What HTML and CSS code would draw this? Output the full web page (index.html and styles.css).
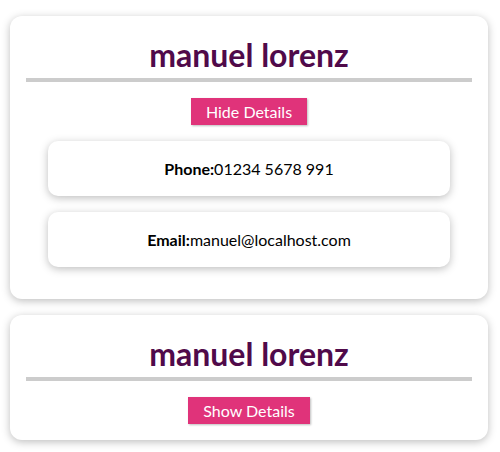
FILE: index.html
```html
<!DOCTYPE html>
<html>
<head>
<meta charset="utf-8">
<link rel="stylesheet" href="styles.css">
</head>
<body>
<ul class="friends">
  <li class="card">
    <h2 class="name">manuel lorenz</h2>
    <button class="toggle">Hide Details</button>
    <ul class="details">
      <li class="detail"><strong>Phone:</strong>01234 5678 991</li>
      <li class="detail"><strong>Email:</strong>manuel@localhost.com</li>
    </ul>
  </li>
  <li class="card">
    <h2 class="name">manuel lorenz</h2>
    <button class="toggle">Show Details</button>
  </li>
</ul>
</body>
</html>
```
FILE: styles.css
```css
html, body {
  margin: 0;
  padding: 0;
  background: #ffffff;
}
body {
  font-family: "Lato", "Open Sans", sans-serif;
  font-size: 16px;
  line-height: 23px;
  color: #000;
}
.friends {
  list-style: none;
  margin: 0;
  padding: 16px 12px 0 10px;
}
.card {
  box-shadow: 0 2px 8px rgba(0, 0, 0, 0.26);
  border-radius: 12px;
  padding: 16px;
  margin: 0 0 16px 0;
  text-align: center;
  background: #fff;
}
.name {
  font-size: 32px;
  line-height: 46px;
  font-weight: 700;
  color: #500a4a;
  margin: 0 0 16px 0;
  border-bottom: 4px solid #cccccc;
}
.toggle {
  font: inherit;
  line-height: 23px;
  border: 1px solid #e0337a;
  background: #e0337a;
  color: #fff;
  padding: 1px 14px;
  box-shadow: 1px 1px 2px rgba(0, 0, 0, 0.26);
  cursor: pointer;
}
.details {
  list-style: none;
  margin: 0;
  padding: 0;
}
.detail {
  width: 90%;
  margin: 16px auto;
  padding: 16px;
  box-sizing: border-box;
  border-radius: 10px;
  box-shadow: 0 2px 8px rgba(0, 0, 0, 0.26);
  line-height: 23px;
}
.detail strong {
  font-weight: 700;
}
```
